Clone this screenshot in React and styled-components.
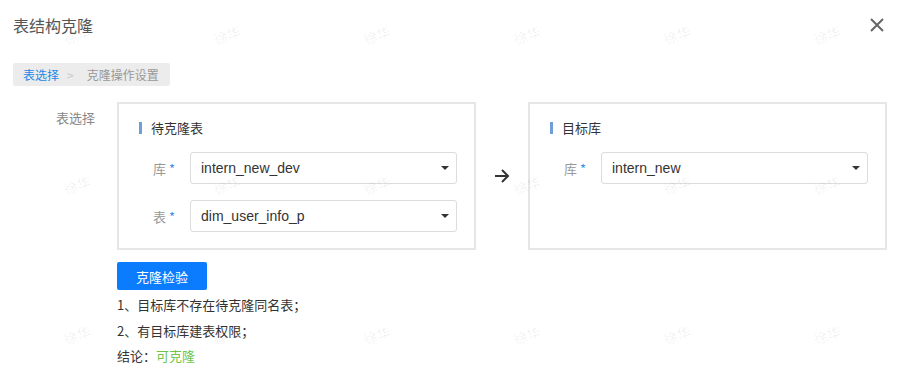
import React from "react";
import styled, { createGlobalStyle } from "styled-components";

const GlobalStyle = createGlobalStyle`
  html, body {
    margin: 0;
    padding: 0;
    background: #fff;
  }
  body {
    font-family: "Liberation Sans", "Noto Sans CJK SC", sans-serif;
    color: #333;
  }
`;

const Page = styled.div`
  position: relative;
  width: 902px;
  height: 379px;
  overflow: hidden;
  background: #fff;
`;

const Header = styled.div`
  display: flex;
  align-items: center;
  justify-content: space-between;
  height: 52px;
  padding: 0 16px 0 13px;
`;

const Title = styled.div`
  font-size: 16px;
  line-height: 20px;
  color: #555;
  font-family: "Noto Sans CJK SC", sans-serif;
  margin-top: -2px;
`;

const Close = styled.button`
  display: flex;
  align-items: center;
  justify-content: center;
  width: 18px;
  height: 18px;
  padding: 0;
  border: none;
  background: none;
  margin-top: -2px;
`;

const Crumbs = styled.div`
  display: inline-flex;
  align-items: center;
  margin: 11px 0 0 13px;
  height: 23px;
  padding: 0 11px 0 10px;
  background: #ececec;
  border-radius: 2px;
  font-size: 12px;
  font-family: "Noto Sans CJK SC", sans-serif;
  color: #999;
`;

const Crumb = styled.span`
  color: ${(p) => (p.$active ? "#1e88e5" : "#999")};
`;

const Sep = styled.span`
  color: #c8c8c8;
  margin: 0 13px 0 8px;
`;

const FormRow = styled.div`
  display: flex;
  margin-top: 16px;
`;

const SideLabel = styled.div`
  box-sizing: border-box;
  width: 117px;
  padding: 6px 22px 0 0;
  text-align: right;
  font-size: 13px;
  line-height: 20px;
  color: #888;
  font-family: "Noto Sans CJK SC", sans-serif;
`;

const Main = styled.div`
  display: flex;
  flex-direction: column;
  width: 770px;
`;

const Cards = styled.div`
  display: flex;
  align-items: stretch;
`;

const Card = styled.div`
  flex: 1;
  border: 2px solid #e6e6e6;
  padding: 16px 17px 16px 20px;
  box-sizing: border-box;
  display: flex;
  flex-direction: column;
  gap: 16px;
`;

const CardTitle = styled.div`
  display: flex;
  align-items: center;
  gap: 9px;
  font-size: 13px;
  line-height: 16px;
  height: 16px;
  color: #333;
  font-family: "Noto Sans CJK SC", sans-serif;

  &::before {
    content: "";
    width: 3px;
    height: 12px;
    background: #6f9fd6;
  }
`;

const Field = styled.div`
  display: flex;
  align-items: center;
  gap: 15px;
`;

const FieldLabel = styled.div`
  width: 36px;
  text-align: right;
  font-size: 13px;
  color: #999;
  font-family: "Noto Sans CJK SC", sans-serif;

  span {
    color: #3a8ee6;
    margin-left: 3px;
  }
`;

const Select = styled.div`
  flex: 1;
  height: 32px;
  box-sizing: border-box;
  border: 1px solid #dcdcdc;
  border-radius: 3px;
  display: flex;
  align-items: center;
  justify-content: space-between;
  padding: 0 7px 0 10px;
  font-size: 14px;
  color: #333;
  font-family: "Liberation Sans", "Noto Sans CJK SC", sans-serif;
  background: #fff;
`;

const Caret = styled.span`
  width: 0;
  height: 0;
  border-left: 4px solid transparent;
  border-right: 4px solid transparent;
  border-top: 4px solid #333;
`;

const Arrow = styled.div`
  width: 52px;
  display: flex;
  align-items: center;
  justify-content: center;
`;

const CheckButton = styled.button`
  align-self: flex-start;
  margin-top: 12px;
  width: 90px;
  height: 28px;
  border: none;
  border-radius: 2px;
  background: #0c7cff;
  color: #fff;
  font-size: 13px;
  font-family: "Noto Sans CJK SC", sans-serif;
  padding: 0;
`;

const Notes = styled.div`
  margin-top: 2px;
  font-size: 13px;
  line-height: 25.5px;
  color: #333;
  font-family: "Noto Sans CJK SC", sans-serif;
`;

const Ok = styled.span`
  color: #6fc44a;
`;

const Watermark = styled.div`
  position: absolute;
  inset: 0;
  pointer-events: none;
  display: grid;
  grid-template-columns: repeat(6, 150px);
  grid-auto-rows: 150px;
  transform: translate(2px, -40px);
`;

const Mark = styled.div`
  display: flex;
  align-items: center;
  justify-content: center;
  font-size: 14px;
  color: rgba(0, 0, 0, 0.065);
  font-family: "Noto Sans CJK SC", sans-serif;

  span {
    transform: rotate(-20deg);
  }
`;

const SelectField = ({ label, value }) => (
  <Field>
    <FieldLabel>
      {label}
      <span>*</span>
    </FieldLabel>
    <Select>
      {value}
      <Caret />
    </Select>
  </Field>
);

export default function App() {
  return (
    <Page>
      <GlobalStyle />
      <Header>
        <Title>表结构克隆</Title>
        <Close>
          <svg width="16" height="16" viewBox="0 0 16 16">
            <path d="M2 2 L14 14 M14 2 L2 14" stroke="#666" strokeWidth="2" />
          </svg>
        </Close>
      </Header>
      <Crumbs>
        <Crumb $active>表选择</Crumb>
        <Sep>&gt;</Sep>
        <Crumb>克隆操作设置</Crumb>
      </Crumbs>
      <FormRow>
        <SideLabel>表选择</SideLabel>
        <Main>
          <Cards>
            <Card>
              <CardTitle>待克隆表</CardTitle>
              <SelectField label="库" value="intern_new_dev" />
              <SelectField label="表" value="dim_user_info_p" />
            </Card>
            <Arrow>
              <svg width="16" height="16" viewBox="0 0 16 16">
                <path
                  d="M1 8 H14 M8 2 L14 8 L8 14"
                  stroke="#333"
                  strokeWidth="2"
                  fill="none"
                />
              </svg>
            </Arrow>
            <Card>
              <CardTitle>目标库</CardTitle>
              <SelectField label="库" value="intern_new" />
            </Card>
          </Cards>
          <CheckButton>克隆检验</CheckButton>
          <Notes>
            <div>1、目标库不存在待克隆同名表；</div>
            <div>2、有目标库建表权限；</div>
            <div>
              结论：<Ok>可克隆</Ok>
            </div>
          </Notes>
        </Main>
      </FormRow>
      <Watermark>
        {Array.from({ length: 18 }).map((_, i) => (
          <Mark key={i}>
            <span>徐华</span>
          </Mark>
        ))}
      </Watermark>
    </Page>
  );
}
